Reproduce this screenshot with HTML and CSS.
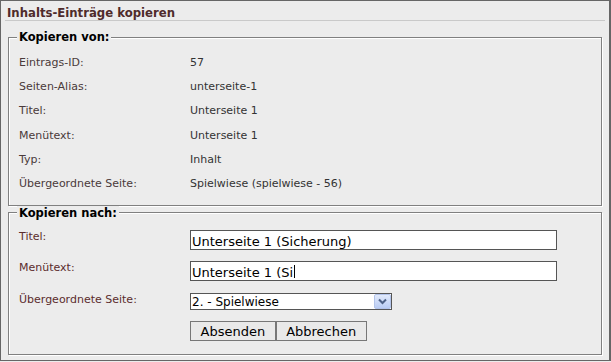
FILE: index.html
```html
<!DOCTYPE html>
<html lang="de">
<head>
<meta charset="utf-8">
<title>Inhalts-Einträge kopieren</title>
<link rel="stylesheet" href="styles.css">
</head>
<body>
<div class="panel">
  <h1 class="title">Inhalts-Einträge kopieren</h1>

  <fieldset class="group group-from">
    <legend class="group-legend">Kopieren von:</legend>
    <dl class="info">
      <div class="info-row"><dt>Eintrags-ID:</dt><dd>57</dd></div>
      <div class="info-row"><dt>Seiten-Alias:</dt><dd>unterseite-1</dd></div>
      <div class="info-row"><dt>Titel:</dt><dd>Unterseite 1</dd></div>
      <div class="info-row"><dt>Menütext:</dt><dd>Unterseite 1</dd></div>
      <div class="info-row"><dt>Typ:</dt><dd>Inhalt</dd></div>
      <div class="info-row"><dt>Übergeordnete Seite:</dt><dd>Spielwiese (spielwiese - 56)</dd></div>
    </dl>
  </fieldset>

  <fieldset class="group group-to">
    <legend class="group-legend">Kopieren nach:</legend>
    <div class="form-row row-title">
      <span class="form-label">Titel:</span>
      <div class="textbox" role="textbox">Unterseite 1 (Sicherung)</div>
    </div>
    <div class="form-row row-menu">
      <span class="form-label">Menütext:</span>
      <div class="textbox" role="textbox">Unterseite 1 (Si<span class="caret"></span></div>
    </div>
    <div class="form-row row-parent">
      <span class="form-label">Übergeordnete Seite:</span>
      <div class="select-wrap">
        <select class="select">
          <option>2. - Spielwiese</option>
        </select>
        <svg class="select-arrow" width="17" height="15" viewBox="0 0 17 15" aria-hidden="true">
          <defs>
            <linearGradient id="arrowbg" x1="0" y1="0" x2="0" y2="1">
              <stop offset="0" stop-color="#e3ebfc"/>
              <stop offset="1" stop-color="#b8cbf3"/>
            </linearGradient>
          </defs>
          <rect x="0.5" y="0.5" width="16" height="14" rx="1.5" fill="url(#arrowbg)" stroke="#b3c4ea"/>
          <polyline points="5,5.5 8.5,9 12,5.5" fill="none" stroke="#4d6185" stroke-width="2"/>
        </svg>
      </div>
    </div>
    <div class="form-actions">
      <button class="btn" type="submit">Absenden</button>
      <button class="btn" type="button">Abbrechen</button>
    </div>
  </fieldset>
</div>
</body>
</html>
```

FILE: styles.css
```css
* {
  box-sizing: border-box;
}

html,
body {
  margin: 0;
  padding: 0;
  background: #ececec;
}

body {
  font-family: "DejaVu Sans", Verdana, sans-serif;
  font-size: 11px;
  color: #333333;
}

.panel {
  width: 611px;
  height: 361px;
  border: 1px solid #666666;
  border-right-width: 2px;
  background: #ececec;
  overflow: hidden;
}

.title {
  margin: 0 4px;
  padding: 6px 0 0 2px;
  font-size: 11.7px;
  line-height: 13px;
  font-weight: bold;
  color: #4f2b2b;
  border-bottom: 1px solid #c9c9c9;
}

.group {
  margin: 0 7px;
  border: 1px solid #808080;
  box-shadow: inset 1px 1px 0 #ffffff, 1px 1px 0 #ffffff;
  min-width: 0;
}

.group-from {
  margin-top: 9px;
  padding: 6.6px 10px 8px;
}

.group-to {
  margin-top: 0;
  padding: 10.6px 10px 13px;
}

.group-legend {
  margin-left: -2px;
  padding: 0 2px;
  font-size: 11.5px;
  font-weight: bold;
  color: #000000;
  background: #ececec;
}

.info {
  margin: 0;
}

.info-row {
  display: grid;
  grid-template-columns: 171px 1fr;
  height: 24.35px;
  line-height: 24.35px;
}

.info-row dt {
  margin: 0;
  color: #4a3a3a;
}

.info-row dd {
  margin: 0;
  color: #333333;
}

.form-row {
  display: grid;
  grid-template-columns: 171px auto;
  justify-content: start;
  align-items: start;
  margin-bottom: 11px;
}

.row-menu {
  margin-bottom: 12px;
}

.form-label {
  line-height: 14px;
  color: #5b2c2c;
}

.textbox {
  width: 367px;
  height: 20px;
  border: 1px solid #555555;
  background: #ffffff;
  padding: 2px 1px 0;
  font-size: 13px;
  line-height: 17px;
  color: #000000;
  white-space: nowrap;
  overflow: hidden;
}

.caret {
  display: inline-block;
  width: 1px;
  height: 13px;
  margin-left: 1px;
  background: #000000;
  vertical-align: -1px;
}

.select-wrap {
  position: relative;
  width: 202px;
  height: 17px;
}

.select {
  display: block;
  width: 202px;
  height: 17px;
  margin: 0;
  padding: 0 0 0 1px;
  border: 1px solid #555555;
  border-radius: 0;
  background: #ffffff;
  font-family: "DejaVu Sans", Verdana, sans-serif;
  font-size: 12px;
  color: #000000;
  appearance: none;
  -webkit-appearance: none;
}

.select-arrow {
  position: absolute;
  top: 1px;
  right: 1px;
  pointer-events: none;
}

.form-actions {
  display: flex;
  margin-left: 171px;
}

.btn {
  height: 20px;
  margin: 0;
  padding: 0 9.5px;
  border: 1px solid #777777;
  border-radius: 0;
  background: #e9e9e9;
  font-family: "DejaVu Sans", Verdana, sans-serif;
  font-size: 13px;
  color: #000000;
}
```
